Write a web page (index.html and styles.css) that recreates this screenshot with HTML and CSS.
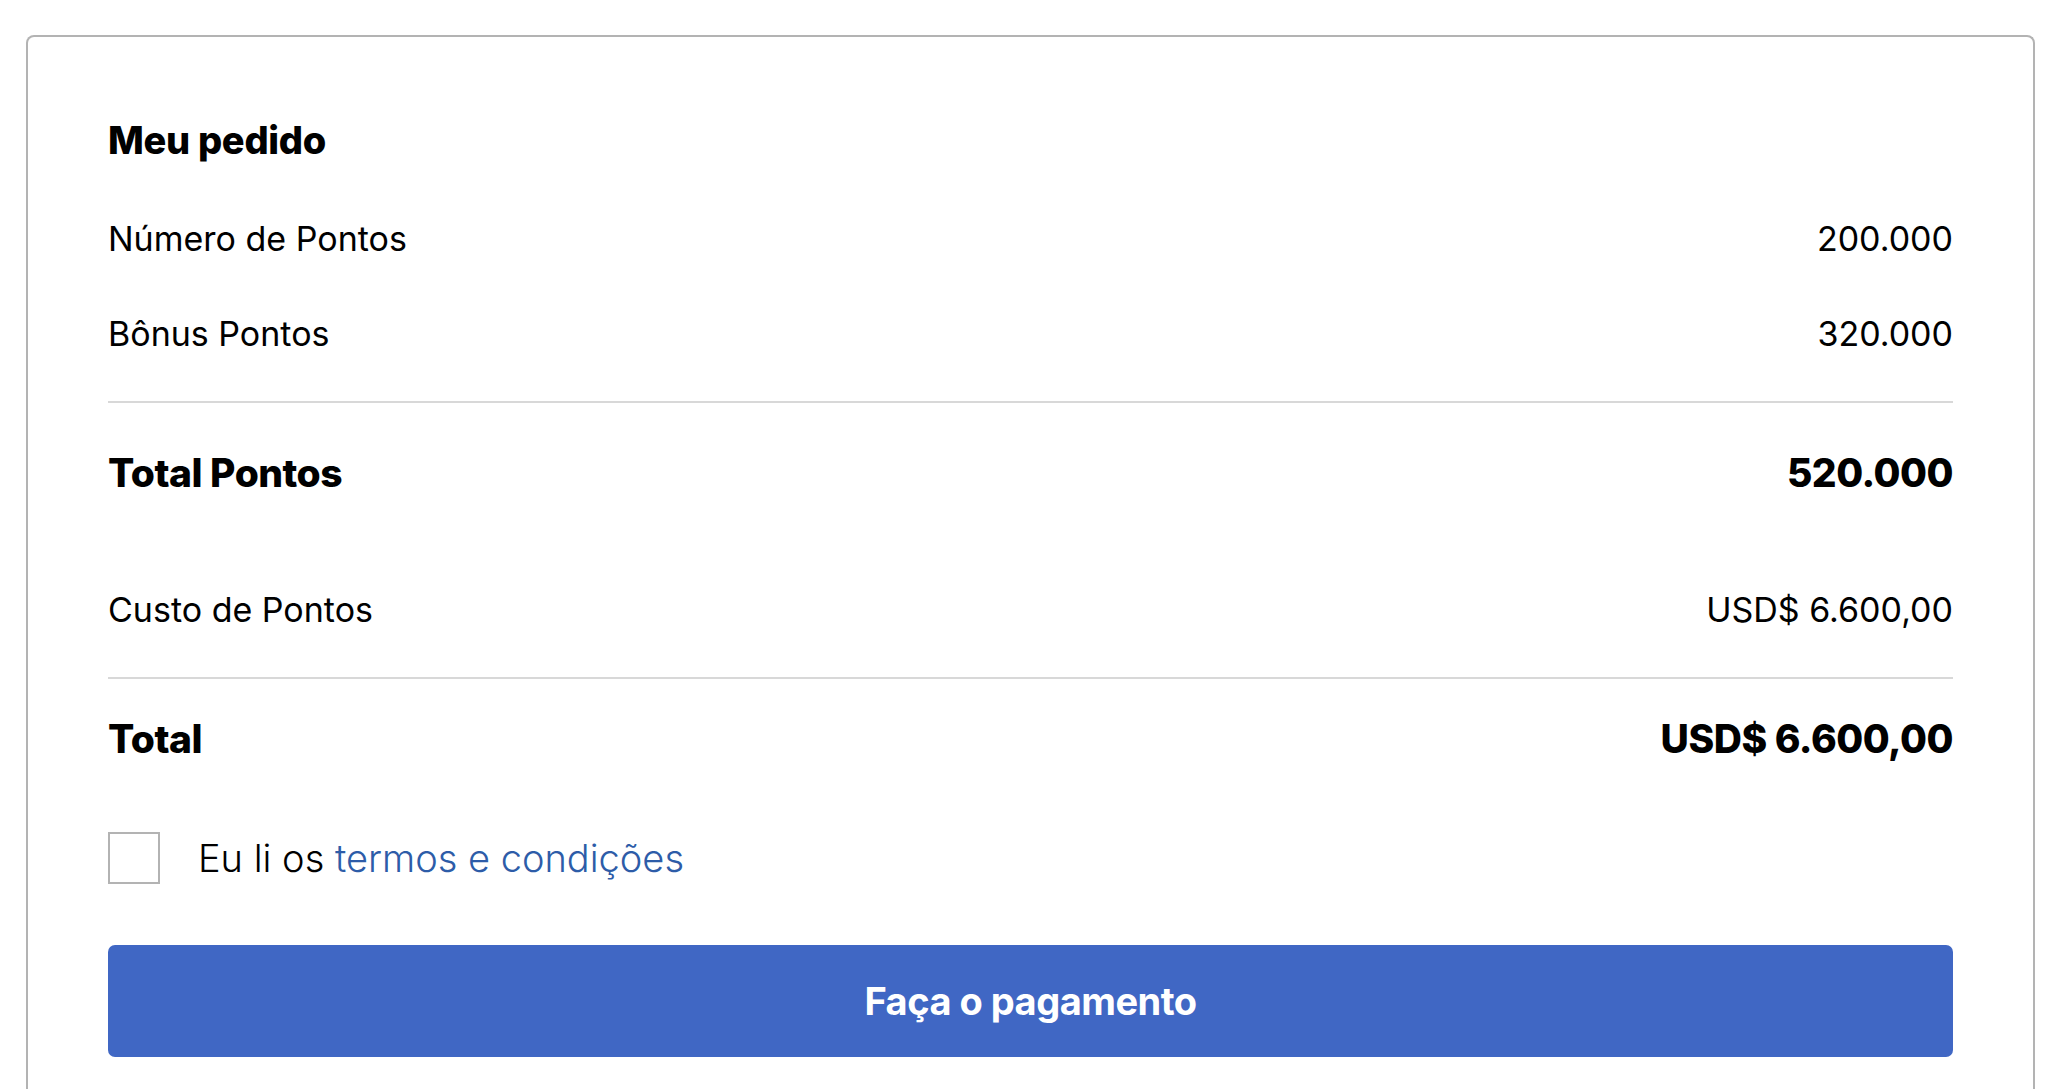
FILE: index.html
```html
<!DOCTYPE html>
<html>
<head>
    <title>Meu pedido</title>
    <link rel="stylesheet" href="styles.css">
</head>
<body>
    <div class="card">
        <h2 class="title">Meu pedido</h2>
        <div class="row first">
            <span>Número de Pontos</span>
            <span>200.000</span>
        </div>
        <div class="row">
            <span>Bônus Pontos</span>
            <span>320.000</span>
        </div>
        <hr class="divider">
        <div class="row total-points">
            <span>Total Pontos</span>
            <span>520.000</span>
        </div>
        <div class="row cost">
            <span>Custo de Pontos</span>
            <span>USD$ 6.600,00</span>
        </div>
        <hr class="divider flush">
        <div class="row total">
            <span>Total</span>
            <span>USD$ 6.600,00</span>
        </div>
        <label class="terms">
            <input type="checkbox" class="check">
            <span class="box"></span>
            <span>Eu li os <a href="#">termos e condições</a></span>
        </label>
        <button type="button" class="pay">Faça o pagamento</button>
    </div>
</body>
</html>
```

FILE: styles.css
```css
body {
    font-family: Inter, "Liberation Sans", sans-serif;
    margin: 0;
    padding: 0;
    background: #fff;
    color: #000;
}
.card {
    margin: 35px 25px 0 26px;
    border: 2px solid #b3b3b3;
    border-bottom: none;
    border-radius: 8px 8px 0 0;
    padding: 0 80px 40px;
}
.title {
    margin: 68px 0 0;
    height: 70px;
    line-height: 70px;
    font-size: 38px;
    font-weight: 800;
    letter-spacing: -0.3px;
}
.row {
    display: flex;
    justify-content: space-between;
    align-items: center;
    height: 95px;
    font-size: 34px;
}
.row.first {
    margin-top: 16px;
}
.divider {
    margin: 20px 0 0;
    border: none;
    border-top: 2px solid #d8d8d8;
}
.divider.flush {
    margin-top: 0;
}
.total-points {
    height: 138px;
    font-size: 39px;
    font-weight: 800;
    letter-spacing: -0.5px;
}
.cost {
    height: 136px;
}
.row.total {
    height: 118px;
    font-size: 39px;
    font-weight: 800;
    letter-spacing: -0.5px;
}
.terms {
    display: flex;
    align-items: center;
    height: 122px;
    font-size: 38px;
    font-weight: 300;
}
.check {
    display: none;
}
.box {
    width: 48px;
    height: 48px;
    border: 2px solid #b3b3b3;
    margin-right: 38px;
}
.terms a {
    color: #2d5ca8;
    text-decoration: none;
}
.pay {
    display: block;
    width: 100%;
    margin-top: 26px;
    height: 112px;
    background-color: #4067c4;
    color: #fff;
    border: none;
    border-radius: 7px;
    font-family: Inter, "Liberation Sans", sans-serif;
    font-size: 38px;
    font-weight: 700;
    letter-spacing: -0.5px;
    cursor: pointer;
}
```
